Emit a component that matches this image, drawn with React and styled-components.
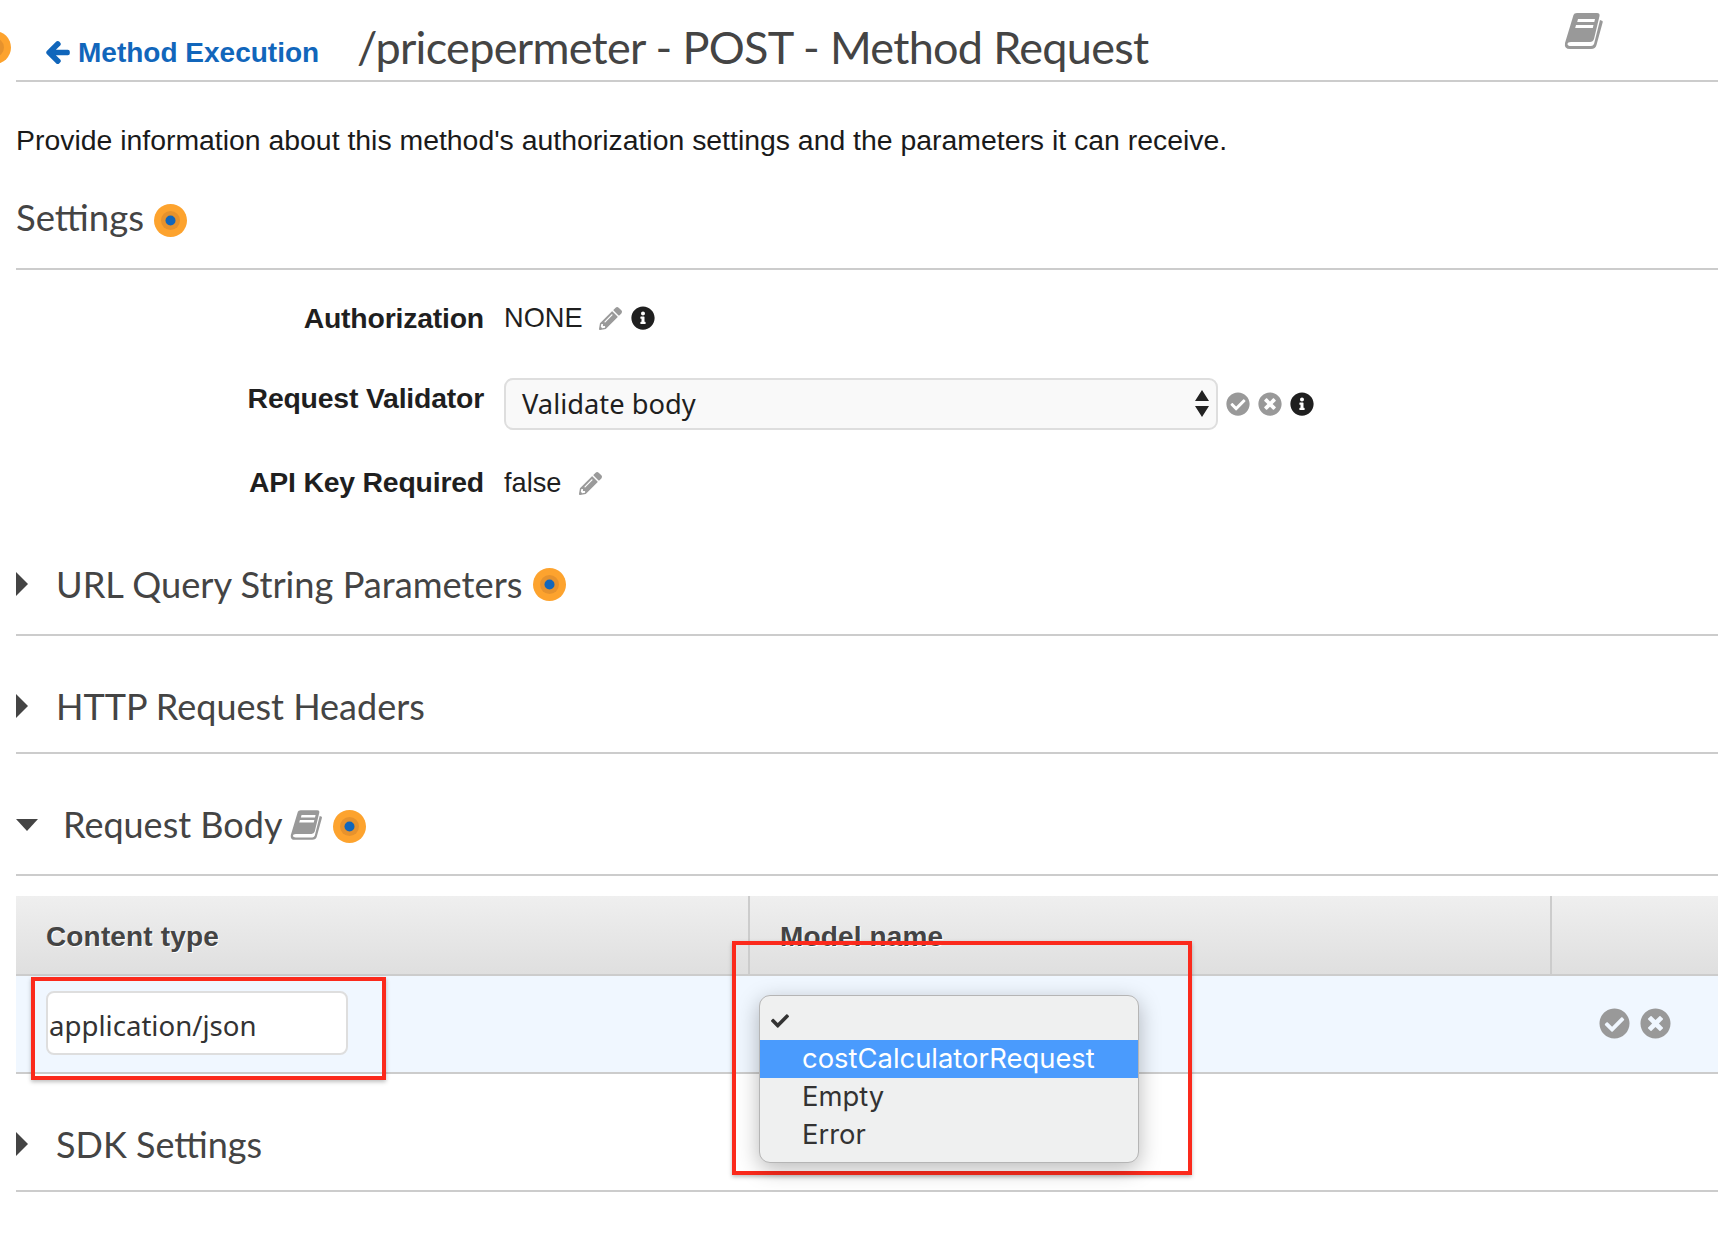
import React from "react";
import styled, { createGlobalStyle } from "styled-components";
import { FaArrowLeft, FaPencilAlt, FaInfoCircle, FaCheckCircle, FaTimesCircle, FaCheck } from "react-icons/fa";

const Global = createGlobalStyle`
  html, body { margin: 0; padding: 0; background: #fff; }
  * { box-sizing: border-box; }
`;

const Page = styled.div`
  position: relative;
  width: 1730px;
  height: 1236px;
  overflow: hidden;
  padding: 0 12px 0 16px;
  font-family: "Liberation Sans", Arial, sans-serif;
  color: #1f1f1f;
`;

const TopBar = styled.header`
  display: flex;
  align-items: center;
  height: 82px;
  padding: 14px 0 0 30px;
  border-bottom: 2px solid #cccccc;
`;

const BackLink = styled.a`
  display: flex;
  align-items: center;
  gap: 8px;
  width: 311px;
  margin-top: 11px;
  font-size: 28px;
  font-weight: 700;
  color: #1166bb;
  svg { width: 24px; height: 25px; stroke: currentColor; stroke-width: 36; }
`;

const PageTitle = styled.h1`
  margin: 0;
  flex: 1;
  font-family: Lato, sans-serif;
  font-size: 45px;
  letter-spacing: -0.7px;
  font-weight: 400;
  color: #444444;
`;

const TopBook = styled.div`
  position: absolute;
  left: 1564px;
  top: 12px;
`;

const CutDot = styled.div`
  position: absolute;
  left: -22px;
  top: 31px;
`;

const Description = styled.p`
  margin: 0;
  padding-top: 42px;
  height: 108px;
  font-size: 28.4px;
  line-height: 32px;
  color: #1a1a1a;
`;

const SectionHead = styled.div`
  display: flex;
  align-items: ${(p) => p.$align || "flex-end"};
  height: ${(p) => p.$h}px;
  padding-bottom: ${(p) => p.$pb}px;
  border-bottom: 2px solid #cccccc;
`;

const SectionTitle = styled.h2`
  margin: 0 0 0 ${(p) => p.$ml || 0}px;
  font-family: Lato, sans-serif;
  font-size: ${(p) => p.$size || 36}px;
  line-height: 44px;
  font-weight: 400;
  color: #444444;
`;

const Caret = styled.span`
  flex: none;
  width: 0;
  height: 0;
  border-style: solid;
  ${(p) =>
    p.$open
      ? `margin-bottom: 15px; border-width: 12px 11px 0 11px; border-color: #444 transparent transparent transparent;`
      : `margin-bottom: 10px; border-width: 12px 0 12px 12px; border-color: transparent transparent transparent #444;`}
`;

const Form = styled.div`
  display: grid;
  grid-template-columns: 468px 1fr;
  column-gap: 20px;
  align-items: center;
  padding-top: 25px;
`;

const Label = styled.div`
  text-align: right;
  font-size: 28.4px;
  font-weight: 700;
  letter-spacing: -0.2px;
  margin-top: ${(p) => p.$mt || 0}px;
`;

const Value = styled.div`
  display: flex;
  align-items: center;
  height: ${(p) => p.$h}px;
  margin-top: ${(p) => p.$mt || 0}px;
  font-size: 27.2px;
  color: #1f1f1f;
`;

const Select = styled.div`
  display: flex;
  align-items: center;
  justify-content: space-between;
  width: 714px;
  height: 52px;
  padding: 0 6px 1px 16px;
  margin-right: 8px;
  background: #f9f9f9;
  border: 2px solid #dedede;
  border-radius: 9px;
  font-family: "Noto Sans", sans-serif;
  font-size: 27.3px;
`;

const Pencil = styled(FaPencilAlt)`
  width: 23px;
  height: 23px;
  margin-left: ${(p) => p.$ml}px;
  color: #9a9a9a;
`;

const StateIcon = styled.span`
  display: inline-flex;
  margin-left: ${(p) => p.$ml || 0}px;
  color: ${(p) => p.$color};
  svg { width: ${(p) => p.$size}px; height: ${(p) => p.$size}px; display: block; }
`;

const TableHead = styled.div`
  display: grid;
  grid-template-columns: 732px 802px 1fr;
  height: 80px;
  margin-top: 20px;
  background: linear-gradient(#efefef, #dfdfdf);
  border-bottom: 2px solid #cccccc;
`;

const HeadCell = styled.div`
  padding: 25px 0 0 30px;
  font-size: 28px;
  font-weight: 700;
  letter-spacing: 0.15px;
  color: #444444;
  text-shadow: 1px 1px 0 #fff;
  & + & { border-left: 2px solid #cccccc; }
`;

const TableRow = styled.div`
  display: flex;
  align-items: center;
  justify-content: space-between;
  height: 98px;
  padding: 0 47px 2px 30px;
  background: #f0f7ff;
  border-bottom: 2px solid #cccccc;
`;

const TextInput = styled.div`
  width: 302px;
  height: 64px;
  padding: 4px 1px 0;
  display: flex;
  align-items: center;
  background: #fff;
  border: 2px solid #dedede;
  border-radius: 8px;
  font-family: "Noto Sans", sans-serif;
  font-size: 27.6px;
  color: #333;
`;

const RowActions = styled.div`
  display: flex;
  gap: 10px;
`;

const RedBox = styled.div`
  position: absolute;
  left: ${(p) => p.$x}px;
  top: ${(p) => p.$y}px;
  width: ${(p) => p.$w}px;
  height: ${(p) => p.$h}px;
  border: 4px solid #fb2a1c;
  box-shadow: 0 2px 4px rgba(0,0,0,.25);
`;

const Dropdown = styled.div`
  position: absolute;
  left: 759px;
  top: 995px;
  width: 380px;
  height: 168px;
  padding: 6px 0 7px;
  background: #eff0f0;
  border: 1px solid #b5b5b5;
  border-radius: 11px;
  box-shadow: 0 6px 22px rgba(0,0,0,.28);
  font-family: Inter, sans-serif;
  font-size: 27.4px;
  color: #333;
`;

const Option = styled.div`
  display: flex;
  align-items: center;
  height: 38px;
  padding-left: ${(p) => (p.$check ? 11 : 42)}px;
  padding-bottom: ${(p) => (p.$check ? 0 : 2)}px;
  background: ${(p) => (p.$active ? "#4a9bfd" : "transparent")};
  color: ${(p) => (p.$active ? "#fff" : "#333")};
  svg { width: 18px; height: 18px; color: #333; }
`;

const Dot = ({ size = 33, style }) => (
  <svg width={size} height={size} viewBox="0 0 33 33" style={style}>
    <circle cx="16.5" cy="16.5" r="16.5" fill="#fda32e" />
    <circle cx="16.5" cy="16.5" r="9.5" fill="#e6922d" />
    <circle cx="16.5" cy="16.5" r="5" fill="#1166bb" />
  </svg>
);

const Book = ({ w = 40, h = 38, style }) => (
  <svg width={w} height={h} viewBox="0 0 40 38" style={style}>
    <path d="M9.5 3 Q10 1 13 1 H33 Q36 1 35.5 4 L30 27 Q29 30 26 30 H7 Q3.5 30 3.5 32 Q3.5 34 7 34 H27 Q29 34 30 32 L36 8 L38.5 9 Q39 10 38.5 11 L32.5 33 Q31.5 37 27 37 H6 Q0 37 1 31 Z" fill="#999" />
    <path d="M14 7 H31 L30.3 10 H13.2 Z M12 13 H29.5 L28.8 16 H11.2 Z" fill="#fff" />
  </svg>
);

const Arrows = () => (
  <svg width="16" height="28" viewBox="0 0 16 28">
    <path d="M8 0 L15 11 H1 Z M1 16 H15 L8 27 Z" fill="#222" />
  </svg>
);

export default function App() {
  return (
    <Page>
      <Global />
      <CutDot><Dot /></CutDot>
      <TopBar>
        <BackLink><FaArrowLeft />Method Execution</BackLink>
        <PageTitle>/pricepermeter - POST - Method Request</PageTitle>
      </TopBar>
      <TopBook><Book /></TopBook>

      <Description>Provide information about this method's authorization settings and the parameters it can receive.</Description>

      <SectionHead $align="center" $h={80} $pb={24}>
        <SectionTitle $size={36.5}>Settings</SectionTitle>
        <Dot style={{ marginLeft: 10, marginTop: 6 }} />
      </SectionHead>

      <Form>
        <Label>Authorization</Label>
        <Value $h={46}>
          NONE
          <Pencil $ml={16} />
          <StateIcon $ml={9} $color="#1f1f1f" $size={24}><FaInfoCircle /></StateIcon>
        </Value>
        <Label $mt={26}>Request Validator</Label>
        <Value $h={52} $mt={37}>
          <Select>Validate body<Arrows /></Select>
          <StateIcon $color="#999" $size={24}><FaCheckCircle /></StateIcon>
          <StateIcon $ml={8} $color="#999" $size={24}><FaTimesCircle /></StateIcon>
          <StateIcon $ml={8} $color="#1f1f1f" $size={24}><FaInfoCircle /></StateIcon>
        </Value>
        <Label $mt={28}>API Key Required</Label>
        <Value $h={46} $mt={30}>
          false
          <Pencil $ml={18} />
        </Value>
      </Form>

      <SectionHead $h={130} $pb={28}>
        <Caret />
        <SectionTitle $ml={28} $size={36.25}>URL Query String Parameters</SectionTitle>
        <Dot style={{ marginLeft: 11, marginBottom: 5 }} />
      </SectionHead>

      <SectionHead $h={118} $pb={24}>
        <Caret />
        <SectionTitle $ml={28}>HTTP Request Headers</SectionTitle>
      </SectionHead>

      <SectionHead $h={122} $pb={28}>
        <Caret $open />
        <SectionTitle $ml={25}>Request Body</SectionTitle>
        <Book w={33} h={32} style={{ marginLeft: 8, marginBottom: 5 }} />
        <Dot style={{ marginLeft: 10, marginBottom: 3 }} />
      </SectionHead>

      <TableHead>
        <HeadCell>Content type</HeadCell>
        <HeadCell>Model name</HeadCell>
        <HeadCell />
      </TableHead>
      <TableRow>
        <TextInput>application/json</TextInput>
        <RowActions>
          <StateIcon $color="#999" $size={31}><FaCheckCircle /></StateIcon>
          <StateIcon $color="#999" $size={31}><FaTimesCircle /></StateIcon>
        </RowActions>
      </TableRow>

      <SectionHead $h={118} $pb={24}>
        <Caret />
        <SectionTitle $ml={28}>SDK Settings</SectionTitle>
      </SectionHead>

      <RedBox $x={31} $y={977} $w={355} $h={103} />
      <RedBox $x={732} $y={941} $w={460} $h={234} />
      <Dropdown>
        <Option $check><FaCheck /></Option>
        <Option $active>costCalculatorRequest</Option>
        <Option>Empty</Option>
        <Option>Error</Option>
      </Dropdown>
    </Page>
  );
}
